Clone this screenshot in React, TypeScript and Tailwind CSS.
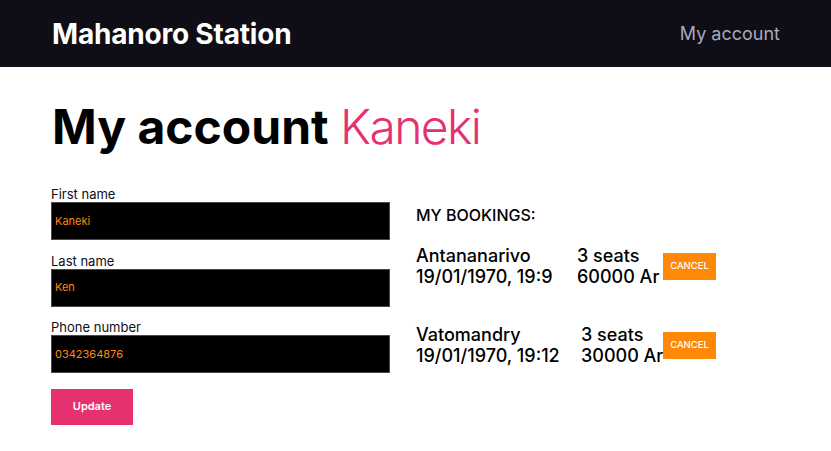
import React from "react";

const font = { fontFamily: "Inter, 'Noto Sans', sans-serif" };

function Field({ label, value }: { label: string; value: string }) {
  return (
    <div className="flex flex-col">
      <label className="text-[13px] leading-[14px] text-[#0f0e17]">{label}</label>
      <div className="mt-[1px] h-[38px] w-[339px] border border-[#4a4a4a] bg-black flex items-center px-[3px]">
        <span className="text-[11px] text-[#ff8906]">{value}</span>
      </div>
    </div>
  );
}

function Booking({
  city,
  date,
  seats,
  price,
  w1,
  w2,
}: {
  city: string;
  date: string;
  seats: string;
  price: string;
  w1: string;
  w2: string;
}) {
  return (
    <div className="flex items-center">
      <div className={`${w1} shrink-0 flex flex-col whitespace-nowrap text-[18px] leading-[21px] font-medium text-black`}>
        <span>{city}</span>
        <span>{date}</span>
      </div>
      <div className={`${w2} shrink-0 flex flex-col whitespace-nowrap text-[18px] leading-[21px] font-medium text-black`}>
        <span>{seats}</span>
        <span>{price}</span>
      </div>
      <button className="w-[53px] h-[27px] shrink-0 bg-[#ff8906] text-white text-[9.5px] font-medium">
        CANCEL
      </button>
    </div>
  );
}

export default function App() {
  return (
    <div style={font} className="min-h-[451px] w-full bg-white">
      <header className="h-[67px] bg-[#0f0e17] flex items-center justify-between pl-[52px] pr-[51px]">
        <span className="text-[28px] font-bold text-[#fffffe] tracking-[-0.2px]">Mahanoro Station</span>
        <span className="text-[18px] text-[#a7a9be]">My account</span>
      </header>
      <main className="pl-[51px] pt-[32px]">
        <h1 className="text-[48px] leading-[56px] font-bold text-black pl-[1px] whitespace-nowrap">
          My account <span className="font-light text-[#e53170] tracking-[-1.6px]">Kaneki</span>
        </h1>
        <div className="mt-[32px] flex">
          <div className="flex flex-col gap-[13.5px]">
            <Field label="First name" value="Kaneki" />
            <Field label="Last name" value="Ken" />
            <Field label="Phone number" value="0342364876" />
            <button className="mt-[2px] w-[82px] h-[36px] bg-[#e53170] text-white text-[11px] font-semibold">
              Update
            </button>
          </div>
          <div className="ml-[26px] pt-[18px] flex flex-col">
            <h2 className="text-[16px] leading-[20px] font-medium text-black">MY BOOKINGS:</h2>
            <div className="mt-[20px] flex flex-col gap-[37px]">
              <Booking city="Antananarivo" date="19/01/1970, 19:9" seats="3 seats" price="60000 Ar" w1="w-[161px]" w2="w-[86px]" />
              <Booking city="Vatomandry" date="19/01/1970, 19:12" seats="3 seats" price="30000 Ar" w1="w-[165px]" w2="w-[82px]" />
            </div>
          </div>
        </div>
      </main>
    </div>
  );
}
